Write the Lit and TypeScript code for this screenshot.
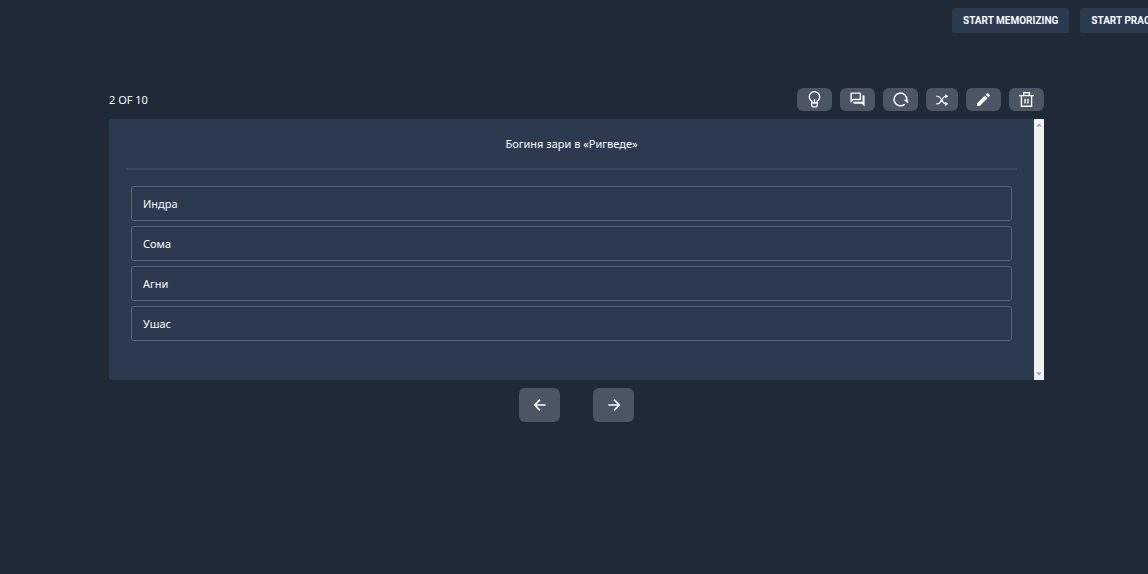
import { LitElement, html, css, svg } from "lit";
import { customElement, state } from "lit/decorators.js";

const icons = {
  hint: svg`<path d="M8.5 17v-2.4A7.3 7.3 0 1 1 15.5 14.6V17M8 17h8v3.2L14.5 22.5h-5L8 20.2z" fill="none" stroke="currentColor" stroke-width="1.9"/><path d="M12 17v-5.5" stroke="currentColor" stroke-width="1.8"/>`,
  chat: svg`<path d="M15 4v7H5.17L4 12.17V4h11m1-2H3c-.55 0-1 .45-1 1v14l4-4h10c.55 0 1-.45 1-1V3c0-.55-.45-1-1-1zm5 4h-2v9H6v2c0 .55.45 1 1 1h11l4 4V7c0-.55-.45-1-1-1z" fill="currentColor"/>`,
  restart: svg`<path d="M18 18.6A9 9 0 1 1 20.9 12.5" fill="none" stroke="currentColor" stroke-width="2.1"/><path d="M16.2 12.5h6.6v5z" fill="currentColor"/>`,
  shuffle: svg`<path d="M2 5.5h2.2C11 5.5 12 18.5 18.3 18.5H20M2 18.5h2.2C11 18.5 12 5.5 18.3 5.5H20" fill="none" stroke="currentColor" stroke-width="2"/><path d="M17.5 1.5l5 4-5 4zM17.5 14.5l5 4-5 4z" fill="currentColor"/>`,
  edit: svg`<path d="M3 17.25V21h3.75L17.81 9.94l-3.75-3.75L3 17.25zM20.71 7.04a1 1 0 0 0 0-1.41l-2.34-2.34a1 1 0 0 0-1.41 0l-1.83 1.83 3.75 3.75 1.83-1.83z" fill="currentColor"/>`,
  remove: svg`<path d="M1.5 6.5h21M4.8 7v14.5h14.4V7M8 6V2.5h8V6M10 11v6.5M14 11v6.5" fill="none" stroke="currentColor" stroke-width="2"/>`,
  back: svg`<path d="M20.5 12H4M12 4l-8 8 8 8" fill="none" stroke="currentColor" stroke-width="2.4"/>`,
  next: svg`<path d="M3.5 12H20M12 4l8 8-8 8" fill="none" stroke="currentColor" stroke-width="2.4"/>`,
};

@customElement("app-root")
export class AppRoot extends LitElement {
  @state() private current = 2;
  private total = 10;
  private answers = ["Индра", "Сома", "Агни", "Ушас"];

  static styles = css`
    :host {
      display: block;
      min-height: 100vh;
      background: #1f2937;
      color: #f9fafb;
      font: 11px/16px "Noto Sans", sans-serif;
    }
    * { box-sizing: border-box; }
    button {
      margin: 0;
      border: 0;
      padding: 0;
      color: inherit;
      font: inherit;
      cursor: pointer;
    }
    svg { display: block; }
    .top {
      display: grid;
      grid-template-columns: 1fr 196px;
      padding-top: 8px;
      overflow: hidden;
    }
    .modes {
      grid-column: 2;
      display: flex;
      gap: 11px;
    }
    .mode {
      flex: none;
      height: 25px;
      padding: 0 11px;
      border-radius: 2px;
      background: #2c3a50;
      font-family: Roboto, "Noto Sans", sans-serif;
      font-size: 10px;
      font-weight: 700;
      white-space: nowrap;
    }
    .deck { padding: 55px 104px 0 109px; }
    .bar {
      display: flex;
      justify-content: space-between;
      align-items: center;
      margin-bottom: 8px;
    }
    .tools { display: flex; gap: 8px; }
    .tool {
      display: grid;
      place-items: center;
      width: 35px;
      height: 23px;
      border-radius: 6px;
      background: #4b5563;
    }
    .narrow { width: 32px; }
    .card {
      display: flex;
      min-height: 261px;
      border-radius: 3px 0 0 3px;
      background: #2c3a50;
      overflow: hidden;
    }
    .content { flex: 1; padding: 0 17px; }
    .question {
      margin: 0;
      padding: 17px 0 16px;
      border-bottom: 2px solid #3b485c;
      font-size: 11px;
      font-weight: 400;
      text-align: center;
    }
    .answers {
      display: grid;
      gap: 5px;
      margin: 0;
      padding: 16px 5px;
      list-style: none;
    }
    .answer {
      display: block;
      width: 100%;
      height: 35px;
      padding: 0 11px;
      border: 1px solid #5b6677;
      border-radius: 3px;
      background: transparent;
      text-align: left;
    }
    .track {
      display: flex;
      flex-direction: column;
      justify-content: space-between;
      align-items: center;
      width: 10px;
      padding: 4px 0;
      background: #f1f1f1;
      color: #a3a3a3;
    }
    .pager {
      display: flex;
      justify-content: center;
      gap: 33px;
      padding-top: 8px;
    }
    .step {
      display: grid;
      place-items: center;
      width: 41px;
      height: 34px;
      border-radius: 6px;
      background: #4b5563;
    }
  `;

  private icon(name: keyof typeof icons, size: number) {
    return html`<svg width=${size} height=${size} viewBox="0 0 24 24" aria-hidden="true">${icons[name]}</svg>`;
  }

  private tool(name: keyof typeof icons, label: string, size: number, extra = "") {
    return html`<button class="tool ${extra}" aria-label=${label}>${this.icon(name, size)}</button>`;
  }

  private move(by: number) {
    this.current = Math.min(this.total, Math.max(1, this.current + by));
  }

  render() {
    return html`
      <header class="top">
        <nav class="modes">
          <button class="mode">START MEMORIZING</button>
          <button class="mode">START PRACTICING</button>
        </nav>
      </header>
      <main class="deck">
        <div class="bar">
          <span>${this.current} OF ${this.total}</span>
          <div class="tools">
            ${this.tool("hint", "Hint", 17)}
            ${this.tool("chat", "Comments", 17)}
            ${this.tool("restart", "Restart", 17)}
            ${this.tool("shuffle", "Shuffle", 14, "narrow")}
            ${this.tool("edit", "Edit", 17)}
            ${this.tool("remove", "Delete", 17)}
          </div>
        </div>
        <section class="card">
          <div class="content">
            <h1 class="question">Богиня зари в «Ригведе»</h1>
            <ul class="answers">
              ${this.answers.map((a) => html`<li><button class="answer">${a}</button></li>`)}
            </ul>
          </div>
          <div class="track" aria-hidden="true">
            <svg width="6" height="4" viewBox="0 0 6 4"><path d="M0 3.5L3 .5l3 3z" fill="currentColor"/></svg>
            <svg width="6" height="4" viewBox="0 0 6 4"><path d="M0 .5l3 3 3-3z" fill="currentColor"/></svg>
          </div>
        </section>
        <div class="pager">
          <button class="step" aria-label="Previous" @click=${() => this.move(-1)}>${this.icon("back", 16)}</button>
          <button class="step" aria-label="Next" @click=${() => this.move(1)}>${this.icon("next", 16)}</button>
        </div>
      </main>
    `;
  }
}
